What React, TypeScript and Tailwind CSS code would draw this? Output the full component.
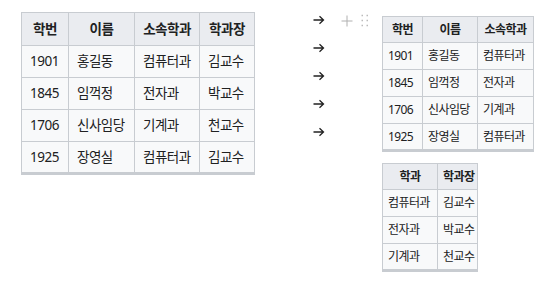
const font = "font-['Noto_Sans','Noto_Sans_CJK_KR',sans-serif]"

type Col = { label: string; w: number }

function WikiTable({
  cols,
  rows,
  size,
  headH,
  rowH
}: {
  cols: Col[]
  rows: string[][]
  size: 'lg' | 'sm'
  headH: string
  rowH: string
}) {
  const total = cols.reduce((s, c) => s + c.w, 0)
  const text = size === 'lg' ? 'text-[13.5px] tracking-[-0.5px]' : 'text-[12px] tracking-[-0.6px]'
  const pad = size === 'lg' ? 'px-[8px]' : 'px-[5px]'
  return (
    <table
      className={`table-fixed border-collapse border border-[#c8ccd1] text-[#202122] ${text}`}
      style={{ width: total }}
    >
      <colgroup>
        {cols.map((c, i) => (
          <col key={i} style={{ width: c.w }} />
        ))}
      </colgroup>
      <thead>
        <tr className={headH}>
          {cols.map((c, i) => (
            <th
              key={i}
              className={`border border-[#c8ccd1] bg-[#eaecf0] ${pad} text-center font-bold whitespace-nowrap`}
            >
              {c.label}
            </th>
          ))}
        </tr>
      </thead>
      <tbody>
        {rows.map((r, i) => (
          <tr key={i} className={rowH}>
            {r.map((v, j) => (
              <td
                key={j}
                className={`border border-[#c8ccd1] bg-[#f8f9fa] ${pad} text-left whitespace-nowrap ${
                  i === rows.length - 1 ? 'border-b-[3px] border-b-[#c8ccd1]' : ''
                }`}
              >
                {v}
              </td>
            ))}
          </tr>
        ))}
      </tbody>
    </table>
  )
}

function Arrow() {
  return (
    <svg width="12" height="10" viewBox="0 0 12 10" className="text-[#222]">
      <path d="M0.5 5h10M6.5 1.2l4 3.8-4 3.8" fill="none" stroke="currentColor" strokeWidth="1.3" />
    </svg>
  )
}

const students = [
  ['1901', '홍길동', '컴퓨터과', '김교수'],
  ['1845', '임꺽정', '전자과', '박교수'],
  ['1706', '신사임당', '기계과', '천교수'],
  ['1925', '장영실', '컴퓨터과', '김교수']
]

export default function App() {
  return (
    <div className={`w-[551px] h-[288px] bg-white flex items-start ${font}`}>
      <div className="ml-[21px] mt-[12px]">
        <WikiTable
          size="lg"
          headH="h-[33px]"
          rowH="h-[32px]"
          cols={[
            { label: '학번', w: 47 },
            { label: '이름', w: 66 },
            { label: '소속학과', w: 65 },
            { label: '학과장', w: 55 }
          ]}
          rows={students}
        />
      </div>

      <div className="ml-[58px] mt-[15px] flex flex-col gap-[18px]">
        {[0, 1, 2, 3, 4].map(i => (
          <Arrow key={i} />
        ))}
      </div>

      <div className="ml-[16px] mt-[15px] flex items-start gap-[8px]">
        <svg width="12" height="12" viewBox="0 0 12 12" className="text-[#b0b0b0]">
          <path d="M6 0.5v11M0.5 6h11" stroke="currentColor" strokeWidth="1" fill="none" />
        </svg>
        <svg width="8" height="14" viewBox="0 0 8 14" className="-mt-[1px] text-[#bbb]">
          {[1.5, 6.5, 11.5].map(y => (
            <g key={y}>
              <rect x="0.5" y={y - 0.75} width="1.5" height="1.5" fill="currentColor" />
              <rect x="5.5" y={y - 0.75} width="1.5" height="1.5" fill="currentColor" />
            </g>
          ))}
        </svg>
      </div>

      <div className="ml-[13px] mt-[16px] flex flex-col gap-[11px]">
        <WikiTable
          size="sm"
          headH="h-[26px]"
          rowH="h-[27px]"
          cols={[
            { label: '학번', w: 40 },
            { label: '이름', w: 55 },
            { label: '소속학과', w: 56 }
          ]}
          rows={students.map(r => r.slice(0, 3))}
        />
        <WikiTable
          size="sm"
          headH="h-[26px]"
          rowH="h-[27px]"
          cols={[
            { label: '학과', w: 55 },
            { label: '학과장', w: 40 }
          ]}
          rows={[
            ['컴퓨터과', '김교수'],
            ['전자과', '박교수'],
            ['기계과', '천교수']
          ]}
        />
      </div>
    </div>
  )
}
